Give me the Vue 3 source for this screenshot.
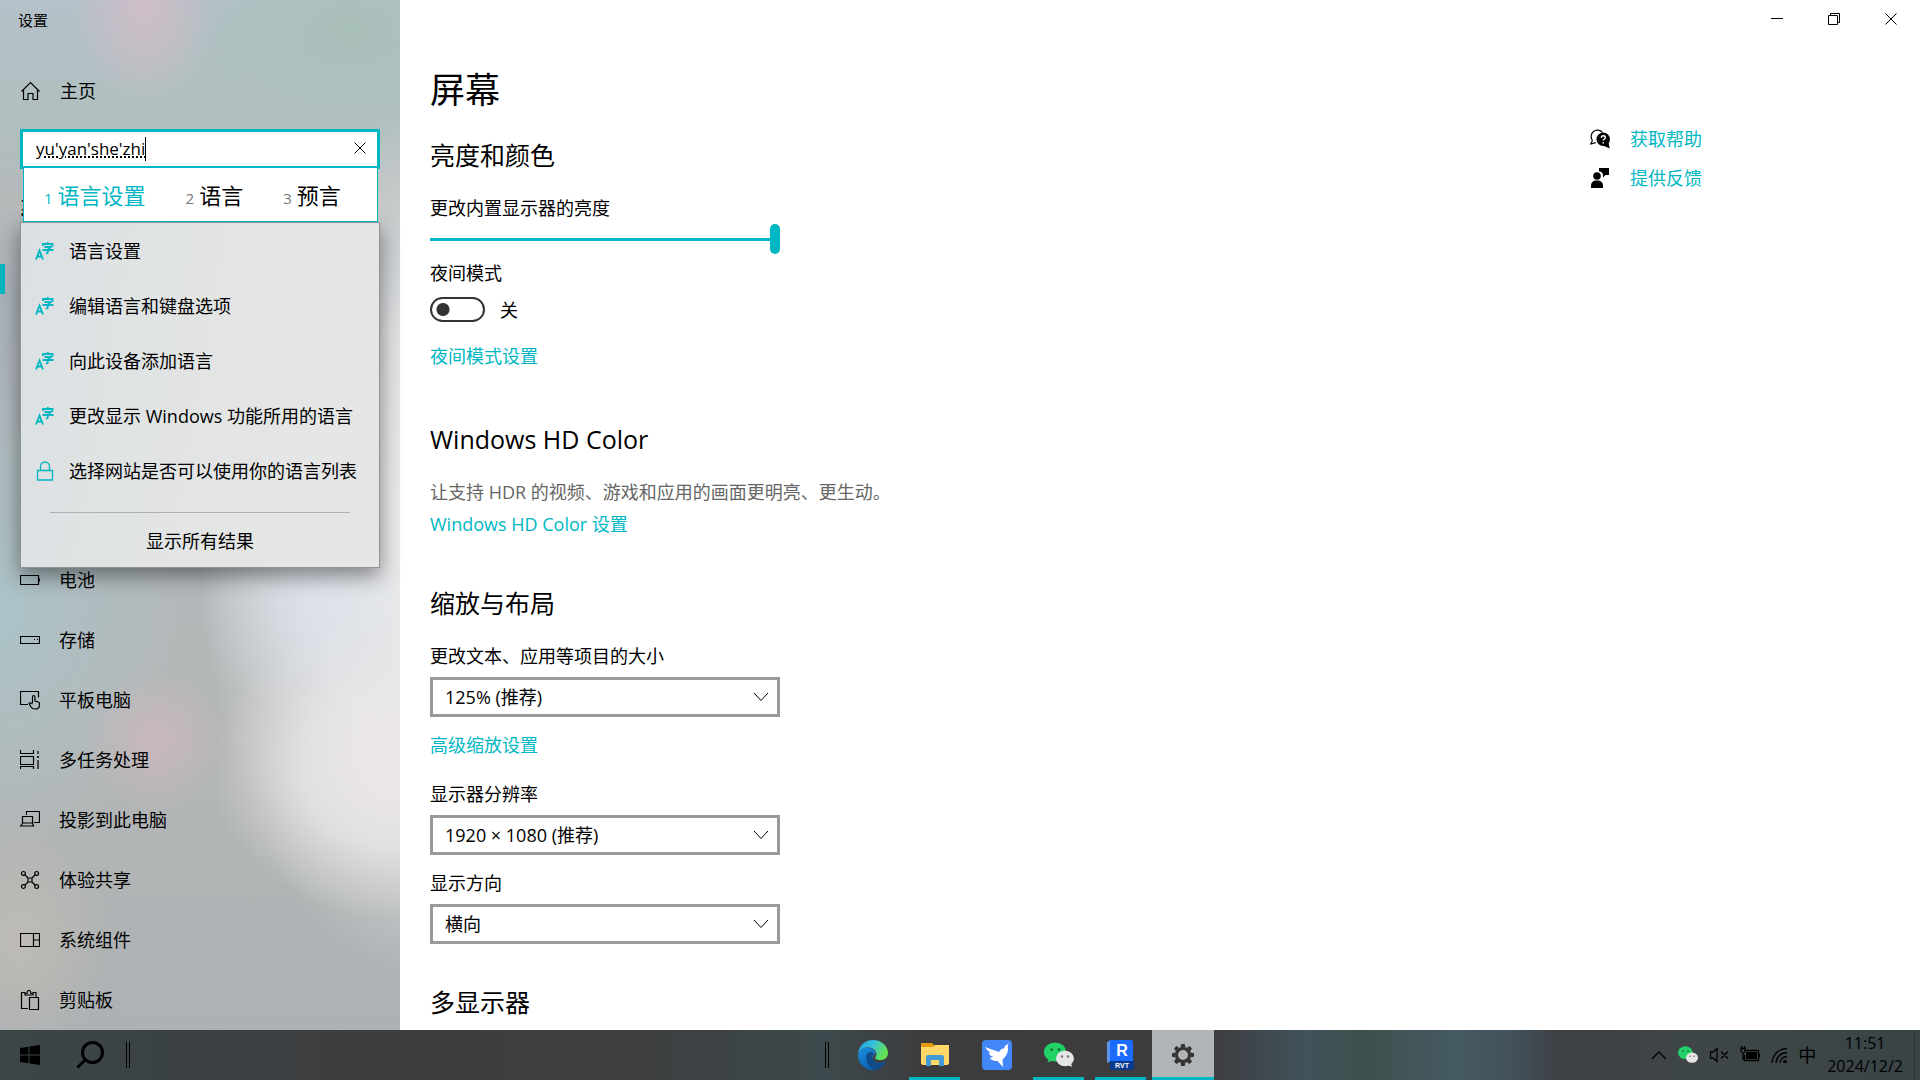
<template>
  <div class="desktop">
    <div class="window">
      <aside class="sidebar">
        <div class="app-title">设置</div>
        <a class="nav-item home" href="#">
          <svg class="icon" viewBox="0 0 20 20"><path d="M1.500 10.500 10.500 1.500l9 9M3.500 9v9.500h4.500v-6h5v6h4.500V9" /></svg>
          <span>主页</span>
        </a>

        <div class="search">
          <div class="search-box">
            <input v-model="query" class="search-input" type="text" aria-label="查找设置" spellcheck="false">
            <span class="caret"></span>
            <button class="clear" type="button" aria-label="清除" @click="query = ''">
              <svg viewBox="0 0 12 12"><path d="M.5.5l11 11M11.500.5l-11 11" /></svg>
            </button>
          </div>
          <ol class="ime">
            <li v-for="(word, i) in candidates" :key="word" :class="{ picked: i === 0 }">
              <small>{{ i + 1 }}</small><span>{{ word }}</span>
            </li>
          </ol>
          <div class="results">
            <a v-for="r in results" :key="r.text" class="result" href="#">
              <svg v-if="r.lock" class="icon" viewBox="0 0 20 20"><path d="M2.500 9.500h15v9.500h-15zM5.500 9.500V5.500a4.500 4.500 0 0 1 9 0v4" /></svg>
              <svg v-else class="icon" viewBox="0 0 20 20"><path class="lang" d="M1 18.500 4.500 9.500l3.500 9M2.200 15.500h4.600M8 5V3h9.500v2M12.800 1v2M9.500 6h6.500l-3.200 2.500v3q0 1-2 .8M7.500 9h11" /></svg>
              <span>{{ r.text }}</span>
            </a>
            <a class="show-all" href="#">显示所有结果</a>
          </div>
        </div>

        <h3 class="group">系统</h3>
        <nav class="nav">
          <a v-for="item in navItems" :key="item.icon" class="nav-item" :class="{ active: item.active }" :aria-label="item.icon" href="#">
            <svg class="icon" viewBox="0 0 20 20"><path :d="icons[item.icon]" /></svg>
            <span v-if="item.text">{{ item.text }}</span>
          </a>
        </nav>
      </aside>

      <div class="main">
        <header class="titlebar">
          <button type="button" aria-label="最小化"><svg viewBox="0 0 12 12"><path d="M0 5.500h12" /></svg></button>
          <button type="button" aria-label="还原"><svg viewBox="0 0 12 12"><path d="M.5 2.500h9v9h-9zM2.500 2.500v-2h9v9h-2" /></svg></button>
          <button type="button" aria-label="关闭"><svg viewBox="0 0 12 12"><path d="M.5.5l11 11M11.500.5l-11 11" /></svg></button>
        </header>

        <div class="body">
          <main class="content">
            <h1>屏幕</h1>

            <section class="brightness">
              <h2>亮度和颜色</h2>
              <label for="bright">更改内置显示器的亮度</label>
              <input id="bright" v-model="brightness" class="slider" type="range" min="0" max="100">
              <label for="night">夜间模式</label>
              <div class="toggle-row">
                <input id="night" v-model="night" class="toggle" type="checkbox">
                <span>{{ night ? '开' : '关' }}</span>
              </div>
              <a href="#">夜间模式设置</a>
            </section>

            <section class="hdr">
              <h2>Windows HD Color</h2>
              <p>让支持 HDR 的视频、游戏和应用的画面更明亮、更生动。</p>
              <a href="#">Windows HD Color 设置</a>
            </section>

            <section class="layout">
              <h2>缩放与布局</h2>
              <div v-for="f in fields" :key="f.id" class="field">
                <label :for="f.id">{{ f.label }}</label>
                <div class="select-wrap">
                  <select :id="f.id"><option>{{ f.value }}</option></select>
                  <svg viewBox="0 0 16 10"><path d="M1 1l7 7.500L15 1" /></svg>
                </div>
                <a v-if="f.link" href="#">{{ f.link }}</a>
              </div>
            </section>

            <section>
              <h2>多显示器</h2>
            </section>
          </main>

          <aside class="help">
            <a href="#">
              <svg class="solid" viewBox="0 0 20 20">
                <path class="outline" d="M2.500 11.500A6.300 6.300 0 1 1 12.500 3.500M2.500 11.500 .8 15l5-1.300" />
                <circle cx="13.200" cy="10.300" r="6.700" /><path d="M13 16.500l6.700 3-1.200-6z" />
                <path class="mark" d="M11.300 8.700q0-2 2-2t2 1.700q0 1-1 1.600t-1 1.500M13.300 13v1.500" />
              </svg>
              <span>获取帮助</span>
            </a>
            <a href="#">
              <svg class="solid" viewBox="0 0 20 20"><circle cx="7" cy="8" r="3.800" /><path d="M1 20v-2.500a5 5 0 0 1 5-5h2a5 5 0 0 1 5 5V20zM9 0h10v7h-3.500L13 9.500V7q-.2-3-4-3.800z" /></svg>
              <span>提供反馈</span>
            </a>
          </aside>
        </div>
      </div>
    </div>

    <footer class="taskbar">
      <div class="bar-left">
        <button class="start" type="button" aria-label="开始">
          <svg viewBox="0 0 20 20"><path d="M0 3l8.500-1.200v7.700H0zM9.500 1.600 20 0v9.500H9.500zM0 10.500h8.500v7.700L0 17zM9.500 10.500H20V20L9.500 18.400z" /></svg>
        </button>
        <button class="find" type="button" aria-label="搜索">
          <svg viewBox="0 0 28 28"><circle cx="16.500" cy="11.500" r="10" /><path d="M9.500 18.500 1.500 26.500" /></svg>
        </button>
        <i class="grip"></i>
      </div>

      <div class="bar-apps">
        <i class="grip"></i>
        <button type="button" aria-label="Edge">
          <svg viewBox="0 0 30 30">
            <defs>
              <linearGradient id="edge-top" x1="0" y1="0" x2="1" y2=".4"><stop offset="0" stop-color="#1b9de2" /><stop offset=".5" stop-color="#35c1dc" /><stop offset="1" stop-color="#63e04f" /></linearGradient>
              <linearGradient id="edge-mid" x1="0" y1="0" x2=".6" y2="1"><stop offset="0" stop-color="#1a8fdf" /><stop offset="1" stop-color="#0b5cac" /></linearGradient>
            </defs>
            <path fill="url(#edge-mid)" d="M0 15C1 8 7 6.500 12 8c4 1.300 6 4 5.500 6-3 1-4 4-2 6.500 3 3.500 9 3 12.500.5C25 27.500 20 30 15 30 6 30 0 23 0 15z" />
            <path fill="#114a8b" d="M9 14c-2 6 1 13 8 15.800 5-.5 9-4 11-8.300-4 2.500-10 2-12.500-1C13 17.500 14 15 16 13.500c-2-2-5-2-7 .5z" />
            <path fill="url(#edge-top)" d="M0 14C1 5.500 7 0 15 0c9 0 15 6.500 15 13 0 4.500-3.500 7-7.500 7-4 0-6-1.500-5-3 1.500-2 1.500-5-1.500-7.500C11 5.500 2.500 7 0 14z" />
          </svg>
        </button>
        <button class="open" type="button" aria-label="文件资源管理器">
          <svg viewBox="0 0 30 30">
            <path fill="#e19b0b" d="M1 3h11l3 3-2 3H1z" /><path fill="#ffd867" d="M1 7h12l2-2h14v18q0 2-2 2H3q-2 0-2-2z" />
            <path fill="#439ad6" d="M6 26V17q0-2 2-2h14q2 0 2 2v9h-5v-6h-8v6z" />
          </svg>
        </button>
        <button type="button" aria-label="迅雷">
          <svg viewBox="0 0 30 30"><rect width="30" height="30" rx="4" fill="#4286f7" /><path fill="#fff" d="M3 7l14 5q2-4 5-3.500Q23 5 26.500 3.500 25 6 26 10q-1 6-5.500 9.500L21 27l-5.500-6q-5 .5-8-3l4-1Q8 16 6.500 13l2-.3Q5 11 3 7z" /></svg>
        </button>
        <button class="open" type="button" aria-label="微信">
          <svg viewBox="0 0 30 30">
            <ellipse cx="11" cy="12" rx="11" ry="9.500" fill="#23d267" /><path fill="#23d267" d="M5 18l-1.500 4.500L9 20z" /><circle cx="7.500" cy="9.500" r="1.500" fill="#137a3c" /><circle cx="15" cy="9.500" r="1.500" fill="#137a3c" />
            <ellipse cx="21" cy="18.500" rx="9" ry="7.700" fill="#e6e6e6" /><path fill="#e6e6e6" d="M24 25l4 2-1-4z" /><circle cx="18" cy="16.500" r="1.200" fill="#777" /><circle cx="24" cy="16.500" r="1.200" fill="#777" />
          </svg>
        </button>
        <button class="open" type="button" aria-label="Revit">
          <svg viewBox="0 0 30 30">
            <path fill="#5b95ea" d="M1 2l4-2v21l-4 2z" /><path fill="#1b6bff" d="M4 0h21q2 0 2 2v20H4z" /><path fill="#08398c" d="M4 21h24v7q0 2-2 2H4z" />
            <text x="16" y="16" font-size="16" font-weight="700" text-anchor="middle" fill="#fff">R</text>
            <text x="16" y="28" font-size="7" font-weight="700" text-anchor="middle" fill="#fff">RVT</text>
          </svg>
        </button>
        <button class="open current" type="button" aria-label="设置">
          <svg class="gear" viewBox="0 0 24 24">
            <path v-for="a in 8" :key="a" d="M9.500 4.500 10.300 1h3.400l.8 3.500z" :transform="`rotate(${a * 45} 12 12)`" />
            <circle cx="12" cy="12" r="6.500" />
          </svg>
        </button>
      </div>

      <div class="tray">
        <svg class="t16" viewBox="0 0 16 16"><path d="M1 12l7-7 7 7" /></svg>
        <svg class="t20" viewBox="0 0 30 30">
          <ellipse cx="11" cy="11.500" rx="11" ry="9.500" fill="#23d267" /><circle cx="7.500" cy="9" r="1.500" fill="#137a3c" /><circle cx="15" cy="9" r="1.500" fill="#137a3c" />
          <ellipse cx="21" cy="19" rx="9" ry="7.700" fill="#e6e6e6" /><circle cx="18" cy="17" r="1.200" fill="#777" /><circle cx="24" cy="17" r="1.200" fill="#777" />
        </svg>
        <svg class="t20" viewBox="0 0 20 20"><path d="M1.500 7v6h2.500l4 3.500v-13L4 7zM12 6.500l7 7M19 6.500l-7 7" /></svg>
        <svg class="t20" viewBox="0 0 20 20"><path d="M5.500 5.500h13v10h-14V10M19.500 8.500v4M1 3.500h4v3q-2 3-4 0zM1.500 1v2M4.500 1v2M3 8v7" /><path class="fill" d="M6 7h11v7H6z" /></svg>
        <svg class="t16" viewBox="0 0 16 16"><path d="M1 16A15 15 0 0 1 16 1.500M5 16A11 11 0 0 1 16 5.500M9 16A7 7 0 0 1 16 9.500" /><circle class="fill" cx="14" cy="14.500" r="1.700" /></svg>
        <span class="lang-mode">中</span>
        <time class="clock"><span>11:51</span><span>2024/12/2</span></time>
        <i class="peek"></i>
      </div>
    </footer>
  </div>
</template>

<script setup>
import { ref } from 'vue'

const query = ref("yu'yan'she'zhi")
const brightness = ref(100)
const night = ref(false)

const candidates = ['语言设置', '语言', '预言']

const results = [
  { text: '语言设置' },
  { text: '编辑语言和键盘选项' },
  { text: '向此设备添加语言' },
  { text: '更改显示 Windows 功能所用的语言' },
  { text: '选择网站是否可以使用你的语言列表', lock: true },
]

const navItems = [
  { icon: 'display', active: true },
  { icon: 'sound' },
  { icon: 'notify' },
  { icon: 'focus' },
  { icon: 'power' },
  { icon: 'battery', text: '电池' },
  { icon: 'storage', text: '存储' },
  { icon: 'tablet', text: '平板电脑' },
  { icon: 'multitask', text: '多任务处理' },
  { icon: 'project', text: '投影到此电脑' },
  { icon: 'share', text: '体验共享' },
  { icon: 'parts', text: '系统组件' },
  { icon: 'clipboard', text: '剪贴板' },
]

const icons = {
  display: 'M.5 3.500h19v11H.5zM6 17.500h8M10 14.500v3',
  sound: 'M.5 7.500h4l5-4.500v14l-5-4.500h-4zM13 7q2 3 0 6M16 5q3 5 0 10',
  notify: 'M.5 2.500h19v13h-9l-4 3v-3h-6z',
  focus: 'M3 3a8 8 0 1 0 14 11A10 10 0 0 1 3 3z',
  power: 'M10 2v8M5 4.500a7 7 0 1 0 10 0',
  battery: 'M.5 5.500h18v9H.5zM19.500 8.500v3',
  storage: 'M.5 6.500h19v7H.5zM14 9.500h1M17 9.500h1',
  tablet: 'M8 14.500H.5V1.500h18v6M12.500 13V7q0-1.500 1.200-1.500T15 7v4l3 .8q1.500.5 1.500 2v1.200q0 4-4.500 4-3 0-4-2L9 13.500q1-1.500 3.500.5',
  multitask: 'M.5 0v3.500h13V0M.5 6.500h13v8H.5zM.5 19v-2.500h13V19M18 1v3M18 10v9M17 7h2M18 6v2',
  project: 'M6.500 5V1.500h13v11H14M2.500 6.500h10v6.500h-10zM2.500 13.500l-2 2.500h13l-1-3',
  share: 'M5 5l3.500 3.500M15 5l-3.500 3.500M5 15l3.500-3.500M15 15l-3.500-3.500M8 8h4v4H8zM5.300 3.400a1.900 1.900 0 1 1-3.800 0 1.900 1.900 0 0 1 3.800 0M18.500 3.400a1.900 1.900 0 1 1-3.800 0 1.900 1.900 0 0 1 3.800 0M5.300 16.600a1.900 1.900 0 1 1-3.800 0 1.900 1.900 0 0 1 3.800 0M18.500 16.600a1.900 1.900 0 1 1-3.800 0 1.900 1.900 0 0 1 3.800 0',
  parts: 'M.5 3.500h19v13H.5zM13.500 3.500v13M13.500 10h6',
  clipboard: 'M8 18.500H1.500v-16H5V5h8V2.500h3V7M5 3.500h2Q7 .5 9 .5t2 3h2M9.500 7.500h9v12h-9z',
}

const fields = [
  { id: 'scale', label: '更改文本、应用等项目的大小', value: '125% (推荐)', link: '高级缩放设置' },
  { id: 'resolution', label: '显示器分辨率', value: '1920 × 1080 (推荐)' },
  { id: 'orientation', label: '显示方向', value: '横向' },
]
</script>

<style>
body { margin: 0; overflow: hidden; }
</style>

<style scoped>
.desktop { --accent: #00b7c3; display: flex; flex-direction: column; height: 100vh; font: 18px/24px "Open Sans", "Noto Sans CJK SC", sans-serif; color: #000; }
.desktop * { box-sizing: border-box; }
a { color: inherit; text-decoration: none; }
button { border: 0; padding: 0; background: none; }
h1, h2, h3, p, ol { margin: 0; padding: 0; font-weight: 400; }
svg { fill: none; stroke: currentColor; stroke-width: 1; flex: none; }
.window { flex: 1; display: flex; min-height: 0; overflow: hidden; }

.sidebar {
  position: relative; flex: 0 0 400px; display: flex; flex-direction: column;
  background:
    radial-gradient(ellipse 70px 90px at 145px 10px, #d6bcc8c0 0, #d6bcc870 50%, #d6bcc800 100%),
    radial-gradient(ellipse 70px 70px at 155px 740px, #d0b8bfc0 0, #d0b8bf60 50%, #d0b8bf00 100%),
    radial-gradient(ellipse 90px 120px at 20px 940px, #c3beb4c0 0, #c3beb400 100%),
    radial-gradient(ellipse 110px 120px at 310px 600px, #dbe2eec0 0, #dbe2ee50 55%, #dbe2ee00 100%),
    radial-gradient(ellipse 190px 150px at 400px 770px, #ebe7e8 0, #ebe7e8c0 50%, #ebe7e850 75%, #ebe7e800 100%),
    radial-gradient(ellipse 230px 440px at 430px 540px, #ededed 0, #ebebebd0 50%, #ebebeb60 75%, #ebebeb00 100%),
    radial-gradient(ellipse 180px 240px at 0 610px, #abc3c8 0, #abc3c870 50%, #abc3c800 100%),
    radial-gradient(ellipse 200px 130px at 350px 30px, #a9bfb9 0, #a9bfb900 100%),
    linear-gradient(#b4c1c9 0, #b1bfc0 10%, #b5b9ba 20%, #abb2ba 29%, #b2b9bc 45%, #b5b7b7 70%, #acb1b3 100%);
}
.app-title { padding: 8px 18px; font-size: 15px; }
.icon { width: 20px; height: 20px; stroke-width: 1.2; }
.nav-item { position: relative; display: flex; align-items: center; gap: 20px; height: 60px; padding: 0 20px; }
.home { margin: 22px 0 8px; }
.nav .nav-item { gap: 19px; }
.nav-item.active::before { content: ''; position: absolute; left: 0; top: 14px; width: 5px; height: 30px; background: var(--accent); }
.group { margin: 27px 20px 30px; font-size: 18px; font-weight: 700; }

.search { position: relative; height: 41px; margin: 0 20px; }
.search-box { display: flex; align-items: center; height: 40px; border: 3px solid var(--accent); background: #fff; padding-left: 13px; }
.home + .search { margin-top: 1px; }
.search-input { field-sizing: content; border: 0; outline: 0; padding: 0; font: inherit; font-size: 17px; color: #000; background: none; text-decoration: underline dotted 2px; text-underline-offset: 1px; }
.caret { width: 1px; height: 24px; background: #000; }
.clear { margin-left: auto; width: 34px; height: 34px; }
.clear svg { width: 12px; height: 12px; }
.ime { position: absolute; z-index: 2; left: 3px; right: 2px; top: 38px; height: 55px; display: flex; align-items: center; gap: 40px; padding: 4px 0 0 20px; border: 1px solid var(--accent); background: #fff; list-style: none; font-size: 22px; }
.ime li { display: flex; align-items: baseline; gap: 5px; }
.ime small { font-size: 15px; color: #777; }
.ime .picked, .ime .picked small { color: var(--accent); }
.results { position: absolute; z-index: 1; left: 0; right: 0; top: 93px; border: 1px solid #8f9396; background: linear-gradient(100deg, #dbe0e3, #e3e5e4 50%, #e6e6e6); box-shadow: 0 8px 20px #00000070; }
.result { display: flex; align-items: center; gap: 14px; height: 55px; padding-left: 14px; white-space: nowrap; }
.result .icon { color: var(--accent); stroke-width: 1.3; }
.lang { stroke-width: 1.8; }
.show-all { display: block; margin-top: 14px; padding-top: 17px; height: 55px; text-align: center; background: linear-gradient(#aeb1b3, #aeb1b3) center top / 300px 1px no-repeat; }

.main { flex: 1; display: flex; flex-direction: column; background: #fff; min-width: 0; }
.titlebar { display: flex; justify-content: flex-end; height: 40px; padding-right: 1px; }
.titlebar button { width: 57px; height: 40px; }
.titlebar svg { width: 12px; height: 12px; }
.body { flex: 1; display: flex; min-height: 0; padding-left: 30px; }
.content { flex: 1; padding-top: 28px; }
.content a, .help a { color: var(--accent); }
.content a, .content label { display: block; width: fit-content; }
h1 { font-size: 35px; line-height: 44px; margin-bottom: 27px; }
h2 { font-size: 25px; line-height: 32px; margin-bottom: 25px; }
.brightness { margin-bottom: 55px; }
.hdr { margin-bottom: 51px; }
.hdr p { margin-bottom: 8px; color: #666; }
.layout { margin-bottom: 42px; }
.slider { display: block; appearance: none; width: 350px; height: 30px; margin: 4px 0 7px; background: linear-gradient(var(--accent), var(--accent)) center / 100% 3px no-repeat; }
.slider::-webkit-slider-thumb { appearance: none; width: 10px; height: 30px; border-radius: 5px; background: var(--accent); }
.toggle-row { display: flex; align-items: center; gap: 15px; margin: 12px 0 22px; }
.toggle { appearance: none; width: 55px; height: 25px; margin: 0; border: 2px solid #333; border-radius: 13px; background: radial-gradient(circle at 11px 50%, #333 6px, #3330 7px); }
.toggle:checked { background: var(--accent); }
.field { display: flex; flex-direction: column; margin-bottom: 16px; }
.field:last-child { margin-bottom: 0; }
.field a { margin: 16px 0 9px; }
.select-wrap { position: relative; width: 350px; margin-top: 9px; }
select { appearance: none; width: 100%; height: 40px; padding: 0 12px; border: 3px solid #999; border-radius: 0; background: #fff; font: inherit; color: #000; }
.select-wrap svg { position: absolute; right: 11px; top: 15px; width: 16px; height: 10px; pointer-events: none; }
.help { flex: 0 0 330px; padding-top: 87px; }
.help a { display: flex; align-items: center; gap: 20px; margin-bottom: 15px; }
.solid { width: 20px; height: 20px; fill: #000; stroke: none; }
.outline { fill: none; stroke: #000; stroke-width: 1.2; }
.mark { fill: none; stroke: #fff; stroke-width: 1.4; }

.taskbar { display: flex; flex: 0 0 50px; background: linear-gradient(90deg, #3b4649 0, #3b4143 10%, #3d3c3e 20%, #3e4041 34%, #3d494c 43%, #3c3c3e 48%, #3d3d40 63%, #41525a 68%, #3e504d 71%, #465a64 76%, #42505a 79%, #3d4145 81%, #3f4647 88%, #3a4446 100%); }
.bar-left, .bar-apps, .tray { display: flex; align-items: center; }
.bar-left { flex: 1 1 0; padding-left: 20px; }
.start svg { display: block; width: 20px; height: 20px; fill: #000; stroke: none; }
.find { margin: 0 22px 0 36px; }
.find svg { display: block; width: 28px; height: 28px; stroke-width: 3; }
.grip { width: 4px; height: 26px; border: solid #000; border-width: 0 1px; }
.bar-apps { flex: none; padding-left: 98px; }
.bar-apps .grip { margin-right: 13px; }
.bar-apps button { width: 62px; height: 50px; display: grid; place-items: center; }
.bar-apps svg { width: 30px; height: 30px; stroke: none; }
.open { background: linear-gradient(var(--accent), var(--accent)) center bottom / 51px 3px no-repeat; }
.bar-apps .current { background: linear-gradient(var(--accent), var(--accent)) center bottom / 100% 3px no-repeat #b1b4b6; }
.bar-apps .gear { width: 24px; height: 24px; fill: #333; }
.gear circle { fill: none; stroke: #333; stroke-width: 3; }
.tray { flex: 1 1 0; justify-content: flex-end; gap: 11px; }
.tray svg { stroke-width: 1.3; }
.t16 { width: 16px; height: 16px; }
.t20 { width: 20px; height: 20px; }
.t20 ellipse, .t20 circle { stroke: none; }
.fill { fill: #000; stroke: none; }
.clock { display: flex; flex-direction: column; align-items: center; font-size: 16px; line-height: 23px; }
.peek { width: 6px; height: 50px; border-left: 1px solid #2b3234; }
</style>
